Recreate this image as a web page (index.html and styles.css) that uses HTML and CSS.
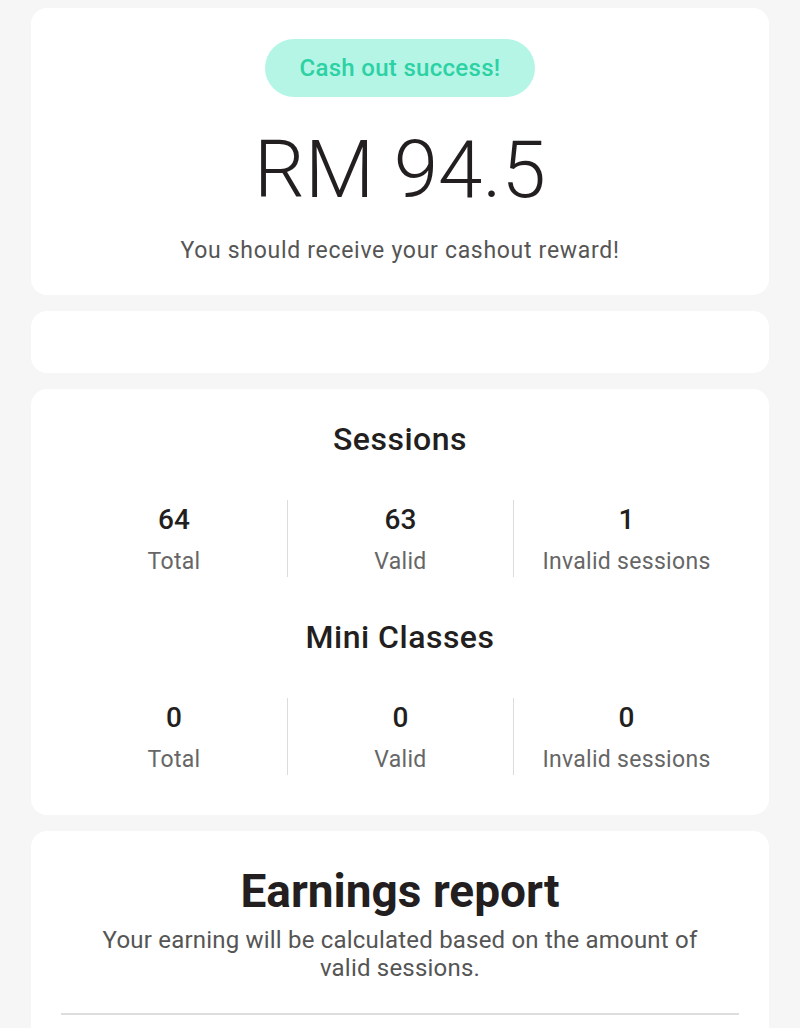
FILE: index.html
```html
<!DOCTYPE html>
<html lang="en">
<head>
  <meta charset="UTF-8">
  <title>Cash out</title>
  <meta name="viewport" content="width=device-width, initial-scale=1.0">
  <link rel="stylesheet" href="styles.css">
</head>
<body>

<div class="card cashout">
  <div class="pill">Cash out success!</div>
  <div class="amount">RM 94.5</div>
  <p class="sub">You should receive your cashout reward!</p>
</div>

<div class="card empty"></div>

<div class="card stats">
  <h2>Sessions</h2>
  <div class="stat-row">
    <div class="stat"><b>64</b><span>Total</span></div>
    <div class="stat"><b>63</b><span>Valid</span></div>
    <div class="stat"><b>1</b><span>Invalid sessions</span></div>
  </div>

  <h2>Mini Classes</h2>
  <div class="stat-row">
    <div class="stat"><b>0</b><span>Total</span></div>
    <div class="stat"><b>0</b><span>Valid</span></div>
    <div class="stat"><b>0</b><span>Invalid sessions</span></div>
  </div>
</div>

<div class="card report">
  <h1>Earnings report</h1>
  <p class="sub">Your earning will be calculated based on the amount of valid sessions.</p>
  <hr>
</div>

</body>
</html>
```

FILE: styles.css
```css
html, body {
  background: #f6f6f6;
  color: #231f20;
  font-family: 'Roboto', 'Liberation Sans', sans-serif;
  margin: 0;
  padding: 0;
}
body {
  padding: 8px 31px 0 31px;
  display: flex;
  flex-direction: column;
  gap: 16px;
}
.card {
  background: #fff;
  border-radius: 16px;
  text-align: center;
}
.cashout {
  padding: 31px 30px 30px 30px;
}
.pill {
  display: inline-block;
  background: #b5f5e6;
  color: #2cd1a4;
  font-size: 24px;
  font-weight: 500;
  letter-spacing: 0.3px;
  line-height: 58px;
  padding: 0 35px;
  border-radius: 29px;
}
.amount {
  margin-top: 33px;
  font-size: 80px;
  font-weight: 300;
  line-height: 80px;
}
.sub {
  margin: 0;
  color: #555;
  font-size: 23px;
  letter-spacing: 0.7px;
  line-height: 28px;
}
.cashout .sub {
  margin-top: 27px;
}
.empty {
  height: 62px;
}
.stats {
  padding: 32px 30px 40px 30px;
}
.stats h2 {
  margin: 0;
  font-size: 32px;
  font-weight: 500;
  letter-spacing: 0.5px;
  line-height: 36px;
}
.stat-row {
  display: grid;
  grid-template-columns: 1fr 1fr 1fr;
  margin: 43px 0 42px 0;
}
.stat-row:last-child {
  margin-bottom: 0;
}
.stat {
  display: flex;
  flex-direction: column;
  align-items: center;
  padding-top: 4px;
  border-left: 1px solid #dcdcdc;
}
.stat:first-child {
  border-left: none;
}
.stat b {
  font-size: 28px;
  font-weight: 500;
  line-height: 32px;
}
.stat span {
  margin-top: 11px;
  color: #666;
  font-size: 23px;
  letter-spacing: 0.3px;
  line-height: 30px;
}
.report {
  padding: 33px 30px 30px 30px;
}
.report h1 {
  margin: 0;
  font-size: 46px;
  font-weight: 700;
  line-height: 54px;
}
.report .sub {
  margin-top: 8px;
  padding: 0 30px;
  font-size: 24px;
  letter-spacing: 0.2px;
}
.report hr {
  margin: 31px 0 0 0;
  border: none;
  border-top: 2px solid #ddd;
}
```
